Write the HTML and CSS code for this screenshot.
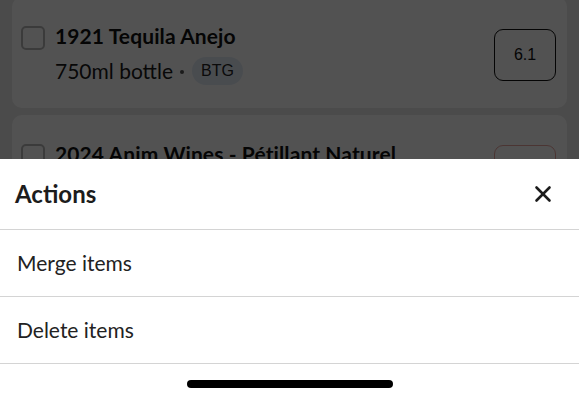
FILE: index.html
```html
<!DOCTYPE html>
<html lang="en">
<head>
<meta charset="utf-8">
<title>Actions</title>
<link rel="stylesheet" href="styles.css">
</head>
<body>
<div class="screen">
  <div class="list">
    <div class="card">
      <span class="checkbox"></span>
      <div class="info">
        <div class="title">1921 Tequila Anejo</div>
        <div class="meta">
          <span class="size">750ml bottle</span>
          <span class="dot"></span>
          <span class="badge">BTG</span>
        </div>
      </div>
      <div class="score">6.1</div>
    </div>
    <div class="card card-cut">
      <span class="checkbox"></span>
      <div class="info">
        <div class="title">2024 Anim Wines - Pétillant Naturel</div>
      </div>
      <div class="score score-warn"></div>
    </div>
  </div>

  <div class="overlay"></div>

  <div class="sheet">
    <div class="sheet-header">
      <h2 class="sheet-title">Actions</h2>
      <button class="close" aria-label="Close">
        <svg width="18" height="18" viewBox="0 0 18 18" fill="none" stroke="#1c1c1c" stroke-width="2.6" stroke-linecap="round">
          <line x1="2.5" y1="2.5" x2="15.5" y2="15.5"/>
          <line x1="15.5" y1="2.5" x2="2.5" y2="15.5"/>
        </svg>
      </button>
    </div>
    <div class="action">Merge items</div>
    <div class="action">Delete items</div>
    <div class="home-area"><span class="home-indicator"></span></div>
  </div>
</div>
</body>
</html>
```

FILE: styles.css
```css
* { box-sizing: border-box; }

html, body {
  margin: 0;
  padding: 0;
}

body {
  width: 579px;
  height: 399px;
  overflow: hidden;
  background: #eaeaea;
  font-family: Lato, "Noto Sans", sans-serif;
  color: #1a1a1a;
}

.screen {
  position: relative;
  width: 579px;
  height: 399px;
  overflow: hidden;
}

.list {
  display: flex;
  flex-direction: column;
  gap: 7px;
  padding: 0 12px;
  margin-top: -3px;
  height: 162px;
  overflow: hidden;
}

.card {
  flex: none;
  display: flex;
  align-items: flex-start;
  gap: 10px;
  background: #ffffff;
  border-radius: 10px;
  padding: 27px 11px 23px 9px;
}

.card-cut {
  height: 111px;
}

.card-cut .score {
  align-self: flex-start;
  margin-top: 3px;
}

.checkbox {
  flex: none;
  width: 24px;
  height: 24px;
  margin-top: 2px;
  border: 2px solid #b8b8b8;
  border-radius: 5px;
}

.info {
  flex: 1;
  display: flex;
  flex-direction: column;
  gap: 9px;
}

.title {
  font-size: 21px;
  font-weight: 700;
  line-height: 24px;
  letter-spacing: 0.1px;
  color: #111;
}

.meta {
  display: flex;
  align-items: center;
  height: 28px;
  font-size: 21px;
  line-height: 24px;
  color: #1a1a1a;
}

.dot {
  width: 4px;
  height: 4px;
  border-radius: 50%;
  background: #555;
  margin: 2px 8px 0 7px;
}

.badge {
  display: flex;
  align-items: center;
  justify-content: center;
  width: 51px;
  height: 28px;
  border-radius: 14px;
  background: #e4ecf6;
  font-family: "Liberation Sans", Arial, sans-serif;
  font-size: 16px;
  color: #222;
}

.score {
  flex: none;
  align-self: center;
  display: flex;
  align-items: center;
  justify-content: center;
  width: 62px;
  height: 52px;
  border: 1.5px solid #111;
  border-radius: 9px;
  font-family: "Liberation Sans", Arial, sans-serif;
  font-size: 16px;
  color: #111;
}

.score-warn {
  border-color: #e9a5a0;
}

.overlay {
  position: absolute;
  inset: 0;
  background: rgba(0, 0, 0, 0.68);
}

.sheet {
  position: absolute;
  left: 0;
  right: 0;
  bottom: 0;
  height: 240px;
  background: #ffffff;
  display: flex;
  flex-direction: column;
}

.sheet-header {
  height: 71px;
  display: flex;
  align-items: center;
  justify-content: space-between;
  padding: 0 25px 1px 15px;
  border-bottom: 1px solid #d4d4d4;
}

.sheet-title {
  margin: 0;
  font-size: 24px;
  font-weight: 700;
  line-height: 28px;
  color: #1c1c1c;
}

.close {
  display: flex;
  align-items: center;
  justify-content: center;
  width: 22px;
  height: 22px;
  padding: 0;
  border: 0;
  background: none;
}

.action {
  height: 67px;
  display: flex;
  align-items: center;
  padding: 0 17px 1px;
  border-bottom: 1px solid #d4d4d4;
  font-size: 21px;
  line-height: 26px;
  color: #222;
}

.home-area {
  flex: 1;
  display: flex;
  justify-content: center;
  padding-top: 16px;
}

.home-indicator {
  width: 206px;
  height: 8px;
  border-radius: 4px;
  background: #000;
}
```
